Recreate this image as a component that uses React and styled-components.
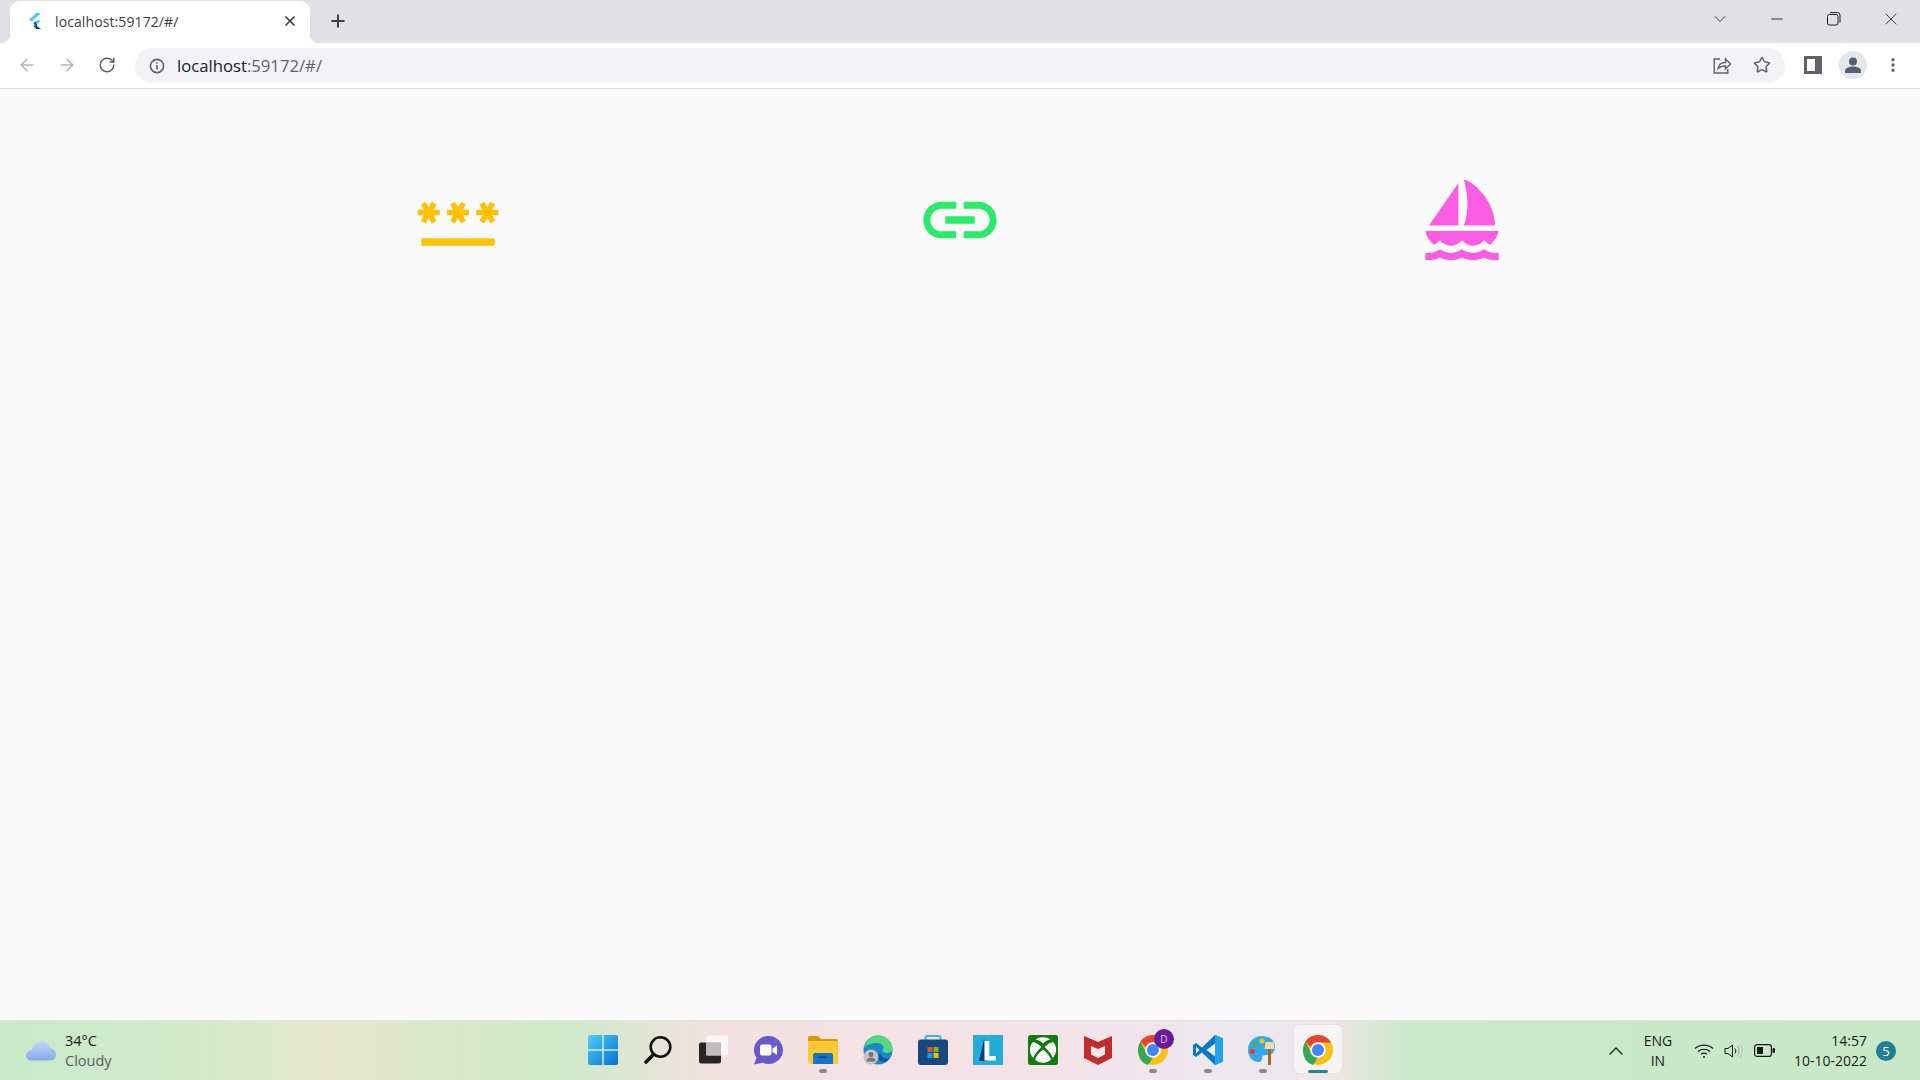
import React from 'react';
import styled, { createGlobalStyle } from 'styled-components';
import { MdPassword, MdLink, MdSailing } from 'react-icons/md';
import { ArrowLeft, ArrowRight, RotateCw, Star, X, Plus, ChevronDown, ChevronUp, Minus, MoreVertical } from 'lucide-react';

const GlobalStyle = createGlobalStyle`
  html, body {
    margin: 0;
    height: 100%;
    overflow: hidden;
    background: #fafafa;
    font-family: "Open Sans", "Noto Sans", "Liberation Sans", sans-serif;
  }
  #root { height: 100%; }
`;

const Screen = styled.div`
  width: 1920px;
  height: 1080px;
  display: flex;
  flex-direction: column;
`;

/* tab strip */
const TabStrip = styled.div`
  height: 43px;
  flex: none;
  background: #dee1e6;
  display: flex;
  align-items: flex-end;
`;

const Tab = styled.div`
  position: relative;
  width: 300px;
  height: 42px;
  margin-left: 10px;
  box-sizing: border-box;
  padding: 0 12px 2px 18px;
  background: #fff;
  border-radius: 9px 9px 0 0;
  display: flex;
  align-items: center;
  color: #3c4043;

  &::before, &::after {
    content: '';
    position: absolute;
    bottom: 0;
    width: 9px;
    height: 9px;
  }
  &::before {
    left: -9px;
    background: radial-gradient(circle at 0 0, transparent 9px, #fff 9.5px);
  }
  &::after {
    right: -9px;
    background: radial-gradient(circle at 100% 0, transparent 9px, #fff 9.5px);
  }
`;

const TabTitle = styled.span`
  flex: 1;
  margin-left: 13px;
  font-size: 14px;
  letter-spacing: 0.1px;
`;

const NewTab = styled.div`
  width: 28px;
  margin-left: 14px;
  height: 42px;
  padding-bottom: 2px;
  box-sizing: border-box;
  display: flex;
  align-items: center;
  justify-content: center;
  color: #3c4043;
`;

const WinControls = styled.div`
  margin-left: auto;
  margin-right: 1px;
  align-self: flex-start;
  display: flex;
`;

const WinButton = styled.div`
  width: 57px;
  height: 38px;
  display: flex;
  align-items: center;
  justify-content: center;
  color: #1f1f1f;
`;

/* toolbar */
const Toolbar = styled.div`
  height: 45px;
  flex: none;
  background: #fff;
  border-bottom: 1px solid #dadce0;
  display: flex;
  align-items: center;
  padding-left: 7px;
`;

const ToolButton = styled.div`
  width: 40px;
  height: 40px;
  flex: none;
  padding-bottom: 1px;
  box-sizing: border-box;
  display: flex;
  align-items: center;
  justify-content: center;
  color: ${(p) => p.$color || '#5f6368'};
`;

const Omnibox = styled.div`
  flex: none;
  width: 1650px;
  height: 35px;
  margin-left: 8px;
  margin-right: 8px;
  box-sizing: border-box;
  padding: 0 3px 0 14px;
  background: #f1f3f4;
  border-radius: 18px;
  display: flex;
  align-items: center;
`;

const UrlText = styled.span`
  flex: 1;
  margin-left: 12px;
  padding-bottom: 1px;
  font-size: 16.7px;
  color: #5f6368;
  b {
    font-weight: 400;
    color: #202124;
  }
`;

const Avatar = styled.div`
  width: 28px;
  height: 28px;
  border-radius: 50%;
  background: #e4e6ea;
  display: flex;
  align-items: center;
  justify-content: center;
`;

/* flutter page */
const Page = styled.main`
  flex: 1;
  background: #fafafa;
  display: flex;
  justify-content: space-evenly;
  align-items: flex-start;
  padding-top: 87px;
`;

const PageIcon = styled.div`
  width: 88px;
  height: 88px;
  color: ${(p) => p.$color};
  svg {
    display: block;
  }
`;

/* windows taskbar */
const Taskbar = styled.footer`
  height: 60px;
  flex: none;
  border-top: 1px solid #dfe6de;
  box-sizing: border-box;
  background:
    linear-gradient(90deg, #c9e9c8 0, #d0eaca 170px, #e6e8cb 330px, #cde9c8 560px, #f4e2e2 720px, #f5e2e6 1000px, #ece8f0 1250px, #f0e6e6 1330px, #c9e9c9 1410px, #c8e8c8 1920px);
  display: grid;
  grid-template-columns: 1fr auto 1fr;
  align-items: center;
`;

const Weather = styled.div`
  display: flex;
  align-items: center;
  padding-left: 25px;
  gap: 8px;
`;

const TwoLines = styled.div`
  font-size: ${(p) => p.$size || '14px'};
  line-height: 20px;
  color: #1a1a1a;
  text-align: ${(p) => p.$align || 'left'};
`;

const Muted = styled.div`
  color: #55625a;
`;

const Apps = styled.div`
  display: flex;
  height: 100%;
`;

const AppSlot = styled.div`
  position: relative;
  width: 55px;
  height: 57px;
  display: flex;
  align-items: center;
  justify-content: center;

  ${(p) =>
    p.$active &&
    `&::before {
      content: '';
      position: absolute;
      left: 4px;
      top: 4px;
      width: 48px;
      height: 48px;
      border-radius: 5px;
      background: rgba(255, 255, 255, 0.55);
      box-shadow: 0 0 1px rgba(0, 0, 0, 0.2);
    }`}

  svg {
    position: relative;
  }
`;

const RunDot = styled.span`
  position: absolute;
  left: 50%;
  bottom: ${(p) => (p.$active ? '5px' : '5px')};
  transform: translateX(-50%);
  width: ${(p) => (p.$active ? '20px' : '8px')};
  height: ${(p) => (p.$active ? '3px' : '4px')};
  border-radius: 2px;
  background: ${(p) => (p.$active ? '#23859a' : '#8a8a8a')};
`;

const Tray = styled.div`
  display: flex;
  align-items: center;
  justify-content: flex-end;
  color: #1a1a1a;
`;

const Caret = styled.div`
  display: flex;
  margin-right: 10px;
  color: #222;
`;

const Lang = styled(TwoLines)`
  width: 40px;
  margin-right: 16px;
  text-align: center;
`;

const TrayIcons = styled.div`
  display: flex;
  align-items: center;
  gap: 10px;
  margin-right: 19px;
`;

const Badge = styled.div`
  width: 20px;
  height: 20px;
  border-radius: 50%;
  margin: 0 24px 0 9px;
  background: #1f7f95;
  color: #fff;
  font-size: 13px;
  display: flex;
  align-items: center;
  justify-content: center;
`;

const FlutterLogo = () => (
  <svg width="14" height="16" viewBox="0 0 14 16">
    <path d="M8.5 0H13L3.5 8.4 1 6.8z" fill="#45c4f5" />
    <path d="M8.5 7.4H13L7.6 12.2 5.3 10.2z" fill="#45c4f5" />
    <path d="M5.3 10.2 7.6 8.4l2 3.8-2 1.6z" fill="#0f6fb5" />
    <path d="M7.6 12.2 13 16H8.5L5.3 13z" fill="#0a3f73" />
  </svg>
);

const InfoIcon = () => (
  <svg width="16" height="16" viewBox="0 0 16 16" fill="none" stroke="#5f6368" strokeWidth="1.6">
    <circle cx="8" cy="8" r="6.6" />
    <path d="M8 7v4.4" />
    <path d="M8 4.3v1.5" />
  </svg>
);

const ShareIcon = () => (
  <svg width="20" height="20" viewBox="0 0 20 20" fill="none" stroke="#5f6368" strokeWidth="1.4">
    <path d="M8 4H2.2v14h13.6v-4" />
    <path d="M6 13.5c.6-3.800 3.400-6 7.500-6V4l5 5-5 4.800V11c-3 0-5.500.6-7.500 2.500z" />
  </svg>
);

const RestoreIcon = () => (
  <svg width="14" height="14" viewBox="0 0 14 14" fill="none" stroke="#1f1f1f" strokeWidth="1">
    <rect x="0.5" y="2.5" width="10.500" height="10.500" rx="2" />
    <path d="M3 .6h7.500a2.500 2.500 0 0 1 2.500 2.500V10.500" />
  </svg>
);

const PanelIcon = () => (
  <svg width="18" height="18" viewBox="0 0 18 18">
    <rect width="18" height="18" fill="#5f6368" />
    <rect x="3" y="3" width="8" height="12" fill="#fff" />
  </svg>
);

const PersonIcon = () => (
  <svg width="18" height="18" viewBox="0 0 18 18" fill="#56606e">
    <circle cx="9" cy="5.500" r="4" />
    <path d="M1 17v-2c0-3 4-4.500 8-4.500s8 1.500 8 4.500v2z" />
  </svg>
);

const CloudIcon = () => (
  <svg width="32" height="22" viewBox="0 0 32 22">
    <defs>
      <linearGradient id="cloudFill" x1="0" y1="0" x2="0" y2="1">
        <stop offset="0" stopColor="#c4d8f5" />
        <stop offset="1" stopColor="#84a9ec" />
      </linearGradient>
    </defs>
    <path
      d="M7 20.500C3 20.500 1 18 1 15.500 1 12.500 3.500 10.500 6.500 10.500 7.500 5 11 1 16 1c4.500 0 7.500 3 8.500 7 3.500 0 6.500 2.500 6.500 6.500 0 3.500-2.500 6-6 6z"
      fill="url(#cloudFill)"
    />
  </svg>
);

const WifiIcon = () => (
  <svg width="20" height="16" viewBox="0 0 20 16" fill="none" stroke="#1a1a1a" strokeWidth="1.200">
    <path d="M1 5.500c5-4.600 13-4.600 18 0" />
    <path d="M4 8.500c3.400-3 8.600-3 12 0" />
    <path d="M7 11.300c1.800-1.500 4.200-1.500 6 0" />
    <circle cx="10" cy="14" r="1" fill="#1a1a1a" stroke="none" />
  </svg>
);

const SpeakerIcon = () => (
  <svg width="20" height="16" viewBox="0 0 20 16" fill="none" stroke="#1a1a1a" strokeWidth="1">
    <path d="M1 5.500h3L8.500 2v12L4 10.500H1z" />
    <path d="M11 5.500c1 1.500 1 3.500 0 5" />
    <path d="M13.500 3.500c2 2.700 2 6.300 0 9" stroke="#9aa89c" />
    <path d="M16 1.500c3 3.800 3 9.200 0 13" stroke="#b4c2b4" />
  </svg>
);

const BatteryIcon = () => (
  <svg width="21" height="13" viewBox="0 0 21 13">
    <rect x="0.600" y="0.600" width="16.800" height="11.800" rx="2.500" fill="none" stroke="#1a1a1a" strokeWidth="1.200" />
    <rect x="3" y="3" width="6" height="7" fill="#1a1a1a" />
    <rect x="18.500" y="4" width="2.500" height="5" rx="1" fill="#1a1a1a" />
  </svg>
);

/* app icons, 30px artwork */
const StartIcon = () => (
  <svg width="30" height="30" viewBox="0 0 30 30">
    <defs>
      <linearGradient id="winTile" x1="0" y1="0" x2="1" y2="1">
        <stop offset="0" stopColor="#4fd0fb" />
        <stop offset="1" stopColor="#0670cf" />
      </linearGradient>
    </defs>
    <rect width="30" height="30" rx="2" fill="url(#winTile)" />
    <path d="M14.500 0v30M15.500 0v30M0 14.500h30M0 15.500h30" stroke="#e0f2f8" strokeWidth="0.700" />
  </svg>
);

const SearchIcon = () => (
  <svg width="30" height="30" viewBox="0 0 30 30" fill="none" stroke="#111" strokeLinecap="round">
    <circle cx="17.500" cy="12" r="9.800" strokeWidth="2.600" />
    <path d="M10.500 19.500 3 27" strokeWidth="3.600" />
  </svg>
);

const TaskViewIcon = () => (
  <svg width="30" height="30" viewBox="0 0 30 30">
    <rect x="1" y="7.500" width="22" height="21" rx="2" fill="#262626" />
    <rect x="8" y="0.500" width="22" height="20" rx="2" fill="#fff" fillOpacity="0.72" />
    <rect x="8" y="7.500" width="15" height="13" fill="#bdbdbd" />
  </svg>
);

const ChatIcon = () => (
  <svg width="30" height="30" viewBox="0 0 30 30">
    <path d="M15.500 1C23.500 1 30 7.300 30 15s-6.500 14-14.500 14c-2 0-4-.4-5.800-1.200L1 29.500l2.500-6.800C1.800 20.500 1 17.800 1 15 1 7.300 7.500 1 15.500 1z" fill="#6a59cc" />
    <rect x="7" y="9.500" width="11.500" height="11" rx="2" fill="#fff" />
    <path d="M19.500 13.500l4.500-3v9.500l-4.500-3z" fill="#fff" />
  </svg>
);

const FolderIcon = () => (
  <svg width="30" height="30" viewBox="0 0 30 30">
    <path d="M0 3a2 2 0 0 1 2-2h8l3 3h15a2 2 0 0 1 2 2v6H0z" fill="#d59b06" />
    <path d="M0 6h30v21a2 2 0 0 1-2 2H2a2 2 0 0 1-2-2z" fill="#fcc934" />
    <path d="M5 20a2 2 0 0 1 2-2h16a2 2 0 0 1 2 2v9H5z" fill="#1476c6" />
    <rect x="11" y="21.500" width="8" height="1.500" fill="#0b4a86" />
  </svg>
);

const EdgeIcon = () => (
  <svg width="30" height="30" viewBox="0 0 30 30">
    <circle cx="15" cy="15" r="14.500" fill="#1b88c9" />
    <path d="M1 13C3 5 9 .5 15 .5c8 0 14.500 6 14.500 13 0 3-2.500 4.500-6 4.500-2 0-4-1-4-2.500 3-3.500-.5-7.500-5-7.500C9 8 3.500 9.500 1 13z" fill="#54d77f" />
    <path d="M14 20c0 4 3.500 7 9 7l4-4c-2 1-9 1-9-5z" fill="#0c59a4" />
    <circle cx="8" cy="22" r="7.500" fill="#c4c4c4" />
    <circle cx="8" cy="19.500" r="2.500" fill="#777" />
    <path d="M3.500 26.500c0-3 2-4 4.500-4s4.500 1 4.500 4z" fill="#777" />
  </svg>
);

const StoreIcon = () => (
  <svg width="30" height="30" viewBox="0 0 30 30">
    <path d="M7.500 6V3a2 2 0 0 1 2-2h11a2 2 0 0 1 2 2v3" fill="none" stroke="#2fb6e8" strokeWidth="2" />
    <path d="M0 7a2.500 2.500 0 0 1 2.500-2.500h25A2.500 2.500 0 0 1 30 7v20a3 3 0 0 1-3 3H3a3 3 0 0 1-3-3z" fill="#15497f" />
    <rect x="9.500" y="12" width="5" height="5" fill="#f25022" />
    <rect x="15.500" y="12" width="5" height="5" fill="#7fba00" />
    <rect x="9.500" y="18" width="5" height="5" fill="#00a4ef" />
    <rect x="15.500" y="18" width="5" height="5" fill="#ffb900" />
  </svg>
);

const LaunchIcon = () => (
  <svg width="30" height="30" viewBox="0 0 30 30">
    <rect width="30" height="30" fill="#22acd8" />
    <path d="M11 4 6 26h9z" fill="#123a8c" />
    <path d="M11.500 6h4.800v15H23v4.500H11.500z" fill="#fff" />
  </svg>
);

const XboxIcon = () => (
  <svg width="30" height="30" viewBox="0 0 30 30">
    <rect width="30" height="30" rx="2.500" fill="#107c10" />
    <g fill="#fff">
      <path d="M7.500 4.500C12 1.500 18 1.500 22.500 4.500 19.500 4.800 17 6.500 15 8.500 13 6.500 10.500 4.800 7.500 4.500z" />
      <path d="M5 7C8 7.500 11 9.500 13.300 12 9.500 15.500 6.500 19.500 5.200 23 .8 18 .8 11.500 5 7z" />
      <path d="M25 7C22 7.500 19 9.500 16.700 12 20.500 15.500 23.500 19.500 24.800 23 29.200 18 29.200 11.500 25 7z" />
      <path d="M15 14.500C19 17.500 22 21.500 23 24.800 18 28.800 12 28.800 7 24.800 8 21.500 11 17.500 15 14.500z" />
    </g>
  </svg>
);

const McAfeeIcon = () => (
  <svg width="28" height="30" viewBox="0 0 28 30">
    <path d="M0 1l14 6 14-6v22l-14 7-14-7z" fill="#c12d2d" />
    <path d="M7 11l7 3 7-3v8.500l-7 3.500-7-3.500z" fill="#f4e8ea" />
  </svg>
);

const ChromeIcon = () => (
  <svg width="30" height="30" viewBox="0 0 30 30">
    <circle cx="15" cy="15" r="15" fill="#fbc116" />
    <path d="M15 0a15 15 0 0 1 13 7.500H15a7.500 7.500 0 0 0-7 5L2.500 6.500A15 15 0 0 1 15 0z" fill="#ea4335" />
    <path d="M2.500 6.500 8.500 18.500A7.500 7.500 0 0 0 15 22.500L10 30C3 28 0 21.500 0 15c0-3 1-6 2.500-8.500z" fill="#34a853" />
    <circle cx="15" cy="15" r="7.800" fill="#fff" />
    <circle cx="15" cy="15" r="6" fill="#4285f4" />
  </svg>
);

const ProfileBadge = styled.span`
  position: absolute;
  top: 8px;
  left: 29px;
  width: 20px;
  height: 20px;
  border-radius: 50%;
  background: #6a1b9a;
  color: #e1c4ef;
  font-size: 10px;
  display: flex;
  align-items: center;
  justify-content: center;
`;

const VsCodeIcon = () => (
  <svg width="30" height="30" viewBox="0 0 30 30">
    <path d="M22 0l8 3.500v23L22 30 9 17.500 3 22 0 20v-10l3-2 6 4.500z" fill="#0a78c6" />
    <path d="M22 0l8 3.500v23L22 30z" fill="#22a3ee" />
    <path d="M22 8.500 13.500 15l8.500 6.500z" fill="#f2ecf0" />
    <path d="M3 11.500 6.500 15 3 18.500z" fill="#f2ecf0" />
  </svg>
);

const PaintIcon = () => (
  <svg width="30" height="30" viewBox="0 0 30 30">
    <path d="M14 1C6 1 0 7 0 15c0 7 5 12 10 12 3 0 4-1.500 4-4 0-2 1.500-3 4-3 5 0 9-2 9-8C27 5 21 1 14 1z" fill="#35a9e6" />
    <circle cx="7" cy="10" r="2.500" fill="#4caf50" />
    <circle cx="14" cy="6" r="2.500" fill="#ffc107" />
    <circle cx="4.500" cy="16.500" r="2.500" fill="#e53935" />
    <rect x="20" y="13" width="3" height="17" fill="#a86a1e" />
    <path d="M17.500 7h8l1 7h-10z" fill="#f5d9a8" />
  </svg>
);

const APPS = [
  { key: 'start', Icon: StartIcon },
  { key: 'search', Icon: SearchIcon },
  { key: 'taskview', Icon: TaskViewIcon },
  { key: 'chat', Icon: ChatIcon },
  { key: 'explorer', Icon: FolderIcon, running: true },
  { key: 'edge', Icon: EdgeIcon },
  { key: 'store', Icon: StoreIcon },
  { key: 'launcher', Icon: LaunchIcon },
  { key: 'xbox', Icon: XboxIcon },
  { key: 'mcafee', Icon: McAfeeIcon },
  { key: 'chrome-d', Icon: ChromeIcon, running: true, profile: 'D' },
  { key: 'vscode', Icon: VsCodeIcon, running: true },
  { key: 'paint', Icon: PaintIcon, running: true },
  { key: 'chrome', Icon: ChromeIcon, active: true },
];

export default function App() {
  return (
    <Screen>
      <GlobalStyle />
      <TabStrip>
        <Tab>
          <FlutterLogo />
          <TabTitle>localhost:59172/#/</TabTitle>
          <X size={16} strokeWidth={2.6} color="#3c4043" />
        </Tab>
        <NewTab>
          <Plus size={20} strokeWidth={2.4} />
        </NewTab>
        <WinControls>
          <WinButton>
            <ChevronDown size={20} strokeWidth={1} />
          </WinButton>
          <WinButton>
            <Minus size={18} strokeWidth={1.2} />
          </WinButton>
          <WinButton>
            <RestoreIcon />
          </WinButton>
          <WinButton>
            <X size={20} strokeWidth={1} />
          </WinButton>
        </WinControls>
      </TabStrip>

      <Toolbar>
        <ToolButton $color="#b3b5b8">
          <ArrowLeft size={20} strokeWidth={1.8} />
        </ToolButton>
        <ToolButton $color="#b3b5b8">
          <ArrowRight size={20} strokeWidth={1.8} />
        </ToolButton>
        <ToolButton>
          <RotateCw size={18} strokeWidth={2} />
        </ToolButton>
        <Omnibox>
          <InfoIcon />
          <UrlText>
            <b>localhost</b>:59172/#/
          </UrlText>
          <ToolButton>
            <ShareIcon />
          </ToolButton>
          <ToolButton>
            <Star size={18} strokeWidth={2} />
          </ToolButton>
        </Omnibox>
        <ToolButton>
          <PanelIcon />
        </ToolButton>
        <ToolButton>
          <Avatar>
            <PersonIcon />
          </Avatar>
        </ToolButton>
        <ToolButton>
          <MoreVertical size={18} strokeWidth={2.4} />
        </ToolButton>
      </Toolbar>

      <Page>
        <PageIcon $color="#ffc107">
          <MdPassword size={88} />
        </PageIcon>
        <PageIcon $color="#2aea6a">
          <MdLink size={88} />
        </PageIcon>
        <PageIcon $color="#fb5ce4">
          <MdSailing size={88} />
        </PageIcon>
      </Page>

      <Taskbar>
        <Weather>
          <CloudIcon />
          <TwoLines $size="14.5px">
            <div>34°C</div>
            <Muted>Cloudy</Muted>
          </TwoLines>
        </Weather>
        <Apps>
          {APPS.map(({ key, Icon, running, active, profile }) => (
            <AppSlot key={key} $active={active}>
              <Icon />
              {profile && <ProfileBadge>{profile}</ProfileBadge>}
              {(running || active) && <RunDot $active={active} />}
            </AppSlot>
          ))}
        </Apps>
        <Tray>
          <Caret>
            <ChevronUp size={24} strokeWidth={1.4} />
          </Caret>
          <Lang>
            <div>ENG</div>
            <div>IN</div>
          </Lang>
          <TrayIcons>
            <WifiIcon />
            <SpeakerIcon />
            <BatteryIcon />
          </TrayIcons>
          <TwoLines $align="right">
            <div>14:57</div>
            <div>10-10-2022</div>
          </TwoLines>
          <Badge>5</Badge>
        </Tray>
      </Taskbar>
    </Screen>
  );
}
